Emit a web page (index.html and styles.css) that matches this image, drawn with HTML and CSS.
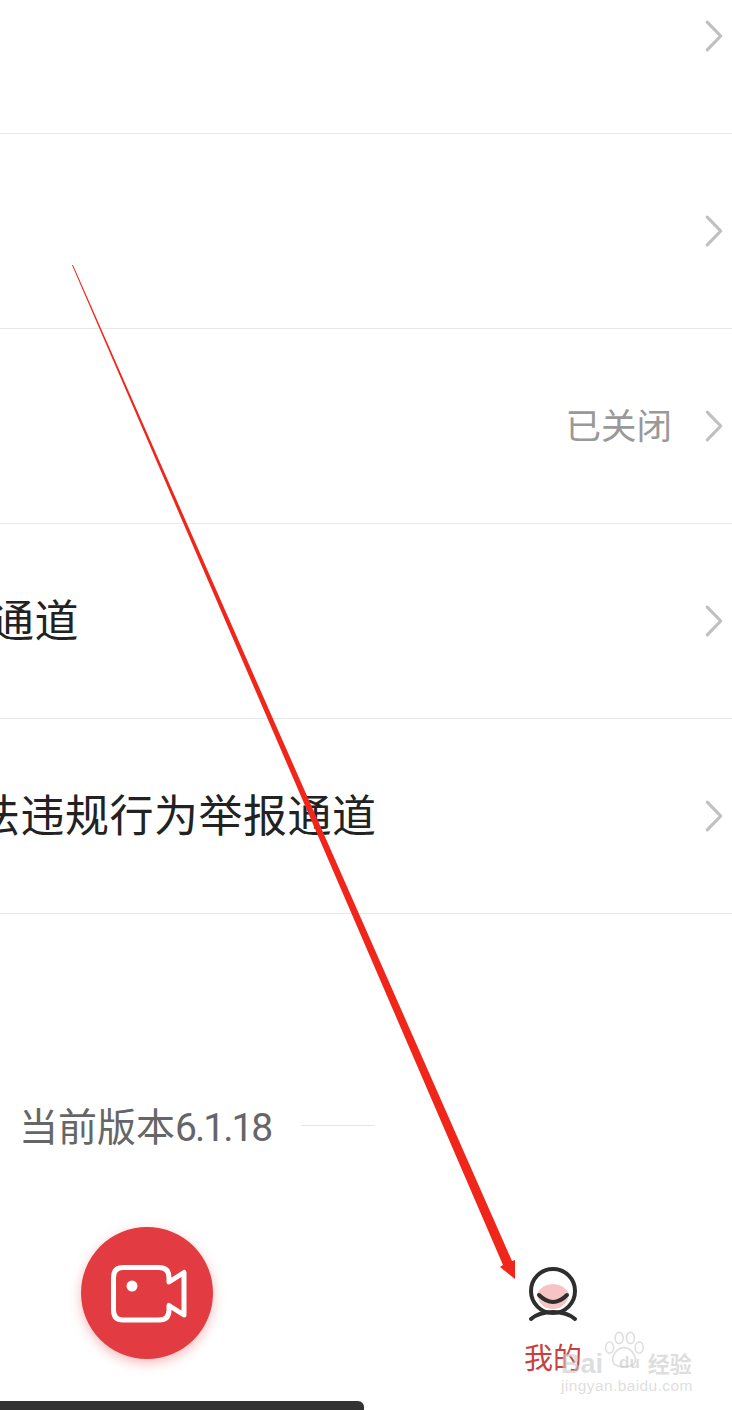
FILE: index.html
```html
<!DOCTYPE html>
<html lang="zh-CN">
<head>
<meta charset="UTF-8">
<title>设置</title>
<link rel="stylesheet" href="styles.css">
</head>
<body>
  <div class="list">
    <div class="row">
      <svg class="chevron" viewBox="0 0 20 36"><path d="M2.5 2.5 L17.5 18 L2.5 33.5"/></svg>
    </div>
    <div class="row">
      <svg class="chevron" viewBox="0 0 20 36"><path d="M2.5 2.5 L17.5 18 L2.5 33.5"/></svg>
    </div>
    <div class="row">
      <span class="state">已关闭</span>
      <svg class="chevron" viewBox="0 0 20 36"><path d="M2.5 2.5 L17.5 18 L2.5 33.5"/></svg>
    </div>
    <div class="row">
      <span class="label label-short">通道</span>
      <svg class="chevron" viewBox="0 0 20 36"><path d="M2.5 2.5 L17.5 18 L2.5 33.5"/></svg>
    </div>
    <div class="row">
      <span class="label label-long">法违规行为举报通道</span>
      <svg class="chevron" viewBox="0 0 20 36"><path d="M2.5 2.5 L17.5 18 L2.5 33.5"/></svg>
    </div>
  </div>

  <div class="version">
    <span class="version-text">当前版本<span class="version-num">6.1.18</span></span>
    <span class="version-line"></span>
  </div>

  <div class="tabbar">
    <div class="record">
      <svg class="record-icon" viewBox="0 0 76 58">
        <path class="cam-body" d="M12 2.500 H48 Q58 2.500 58 12.500 V17 L73 7.500 V50 L58 40.500 V45 Q58 55 48 55 H12 Q2.500 55 2.500 45 V12.500 Q2.500 2.500 12 2.500 Z"/>
        <circle class="cam-dot" cx="21" cy="21" r="5.500"/>
      </svg>
    </div>
    <div class="mine">
      <svg class="mine-icon" viewBox="0 0 50 56">
        <path class="face" d="M9 28 Q14 18 25 18 Q36 18 41 28 Q38 43 25 43 Q12 43 9 28 Z"/>
        <circle class="head" cx="25" cy="25" r="22"/>
        <path class="smile" d="M11 29 Q25 43 39 29"/>
        <path class="shoulder" d="M3 53 Q11 46 25 46 Q39 46 47 53"/>
      </svg>
      <span class="mine-label">我的</span>
    </div>
  </div>

  <div class="home-bar"></div>

  <!-- red annotation arrow drawn on top of the screenshot -->
  <svg class="arrow" viewBox="0 0 732 1410">
    <polygon points="72,265 73,265 512,1261 515,1260 515,1279 500,1267 503,1265"/>
  </svg>

  <div class="watermark">
    <svg class="paw" viewBox="0 0 64 50">
      <ellipse cx="14" cy="22" rx="5" ry="7"/>
      <ellipse cx="26" cy="10" rx="5" ry="7"/>
      <ellipse cx="40" cy="10" rx="5" ry="7"/>
      <ellipse cx="51" cy="22" rx="5" ry="7"/>
      <path d="M32 22 C42 22 50 36 44 43 C38 47 26 47 20 43 C14 36 22 22 32 22 Z"/>
    </svg>
    <div class="wm-top"><span class="wm-bai">Bai</span><span class="wm-du">du</span><span class="wm-cn">经验</span></div>
    <div class="wm-url">jingyan.baidu.com</div>
  </div>
</body>
</html>
```

FILE: styles.css
```css
html, body {
  margin: 0;
  padding: 0;
}
body {
  position: relative;
  width: 732px;
  height: 1410px;
  overflow: hidden;
  background: #fff;
  font-family: "Noto Sans CJK SC", "Noto Sans", sans-serif;
}

.list {
  margin-top: -61px;
}
.row {
  display: flex;
  align-items: center;
  box-sizing: border-box;
  height: 195px;
  padding-right: 9px;
  border-bottom: 1px solid #e8e8e8;
}
.label {
  padding-bottom: 6px;
  font-size: 44px;
  letter-spacing: 0.5px;
  color: #222;
  white-space: nowrap;
}
.label-short {
  margin-left: -10px;
}
.label-long {
  margin-left: -24px;
}
.state {
  margin-left: auto;
  margin-right: 33px;
  padding-bottom: 5px;
  font-size: 35.500px;
  color: #999;
}
.chevron {
  flex: none;
  width: 18px;
  height: 34px;
  margin-left: auto;
  fill: none;
  stroke: #c0c0c0;
  stroke-width: 3.500;
  stroke-linecap: round;
  stroke-linejoin: round;
}
.state + .chevron {
  margin-left: 0;
}

.version {
  display: flex;
  align-items: center;
  gap: 30px;
  margin-top: 183px;
  padding-left: 19px;
  height: 56px;
}
.version-text {
  padding-bottom: 2px;
  font-size: 39px;
  color: #666;
  white-space: nowrap;
}
.version-num {
  font-family: Roboto, sans-serif;
  letter-spacing: -2px;
}
.version-line {
  width: 74px;
  height: 1px;
  background: #e6e6e6;
}

.tabbar {
  display: flex;
  justify-content: space-between;
  margin-top: 74px;
  padding-left: 81px;
  padding-right: 150px;
}
.record {
  display: flex;
  align-items: center;
  justify-content: center;
  box-sizing: border-box;
  width: 132px;
  height: 132px;
  padding-left: 3px;
  padding-top: 2px;
  border-radius: 50%;
  background: #e23b41;
  box-shadow: 0 4px 12px rgba(226, 59, 65, 0.35);
}
.record-icon {
  width: 76px;
  height: 58px;
  fill: none;
}
.cam-body {
  stroke: #fff;
  stroke-width: 5;
  stroke-linejoin: round;
}
.cam-dot {
  fill: #fff;
}

.mine {
  display: flex;
  flex-direction: column;
  align-items: center;
  margin-top: 39px;
}
.mine-icon {
  width: 50px;
  height: 56px;
  fill: none;
}
.face {
  fill: #f6c4c4;
}
.head, .smile, .shoulder {
  stroke: #2e2e2e;
  stroke-width: 4;
  stroke-linecap: round;
}
.mine-label {
  margin-top: 16px;
  font-size: 29px;
  line-height: 36px;
  color: #c9413f;
}

.home-bar {
  position: absolute;
  left: 0;
  top: 1401px;
  width: 364px;
  height: 12px;
  border-top-right-radius: 6px;
  background: #333;
}

.arrow {
  position: absolute;
  left: 0;
  top: 0;
  width: 732px;
  height: 1410px;
  pointer-events: none;
}
.arrow polygon {
  fill: #f0261b;
}

.watermark {
  position: absolute;
  left: 561px;
  top: 1330px;
  width: 135px;
  height: 66px;
  color: rgba(200, 200, 200, 0.6);
}
.paw {
  position: absolute;
  left: 37px;
  top: 0;
  width: 52px;
  height: 40px;
  fill: none;
  stroke: rgba(200, 200, 200, 0.6);
  stroke-width: 2;
}
.wm-top {
  position: absolute;
  left: 0;
  top: 15px;
  display: flex;
  align-items: center;
  white-space: nowrap;
  font-family: "Liberation Sans", sans-serif;
  font-weight: bold;
  line-height: 32px;
}
.wm-bai {
  padding-top: 3px;
  font-size: 27px;
}
.wm-du {
  margin-left: 16px;
  font-size: 17px;
}
.wm-cn {
  margin-left: 8px;
  padding-bottom: 2px;
  font-family: "Noto Sans CJK SC", sans-serif;
  font-size: 22px;
}
.wm-url {
  position: absolute;
  left: 0;
  top: 47px;
  font-family: "Liberation Sans", sans-serif;
  font-size: 15.500px;
  letter-spacing: 0.400px;
  white-space: nowrap;
}
```
